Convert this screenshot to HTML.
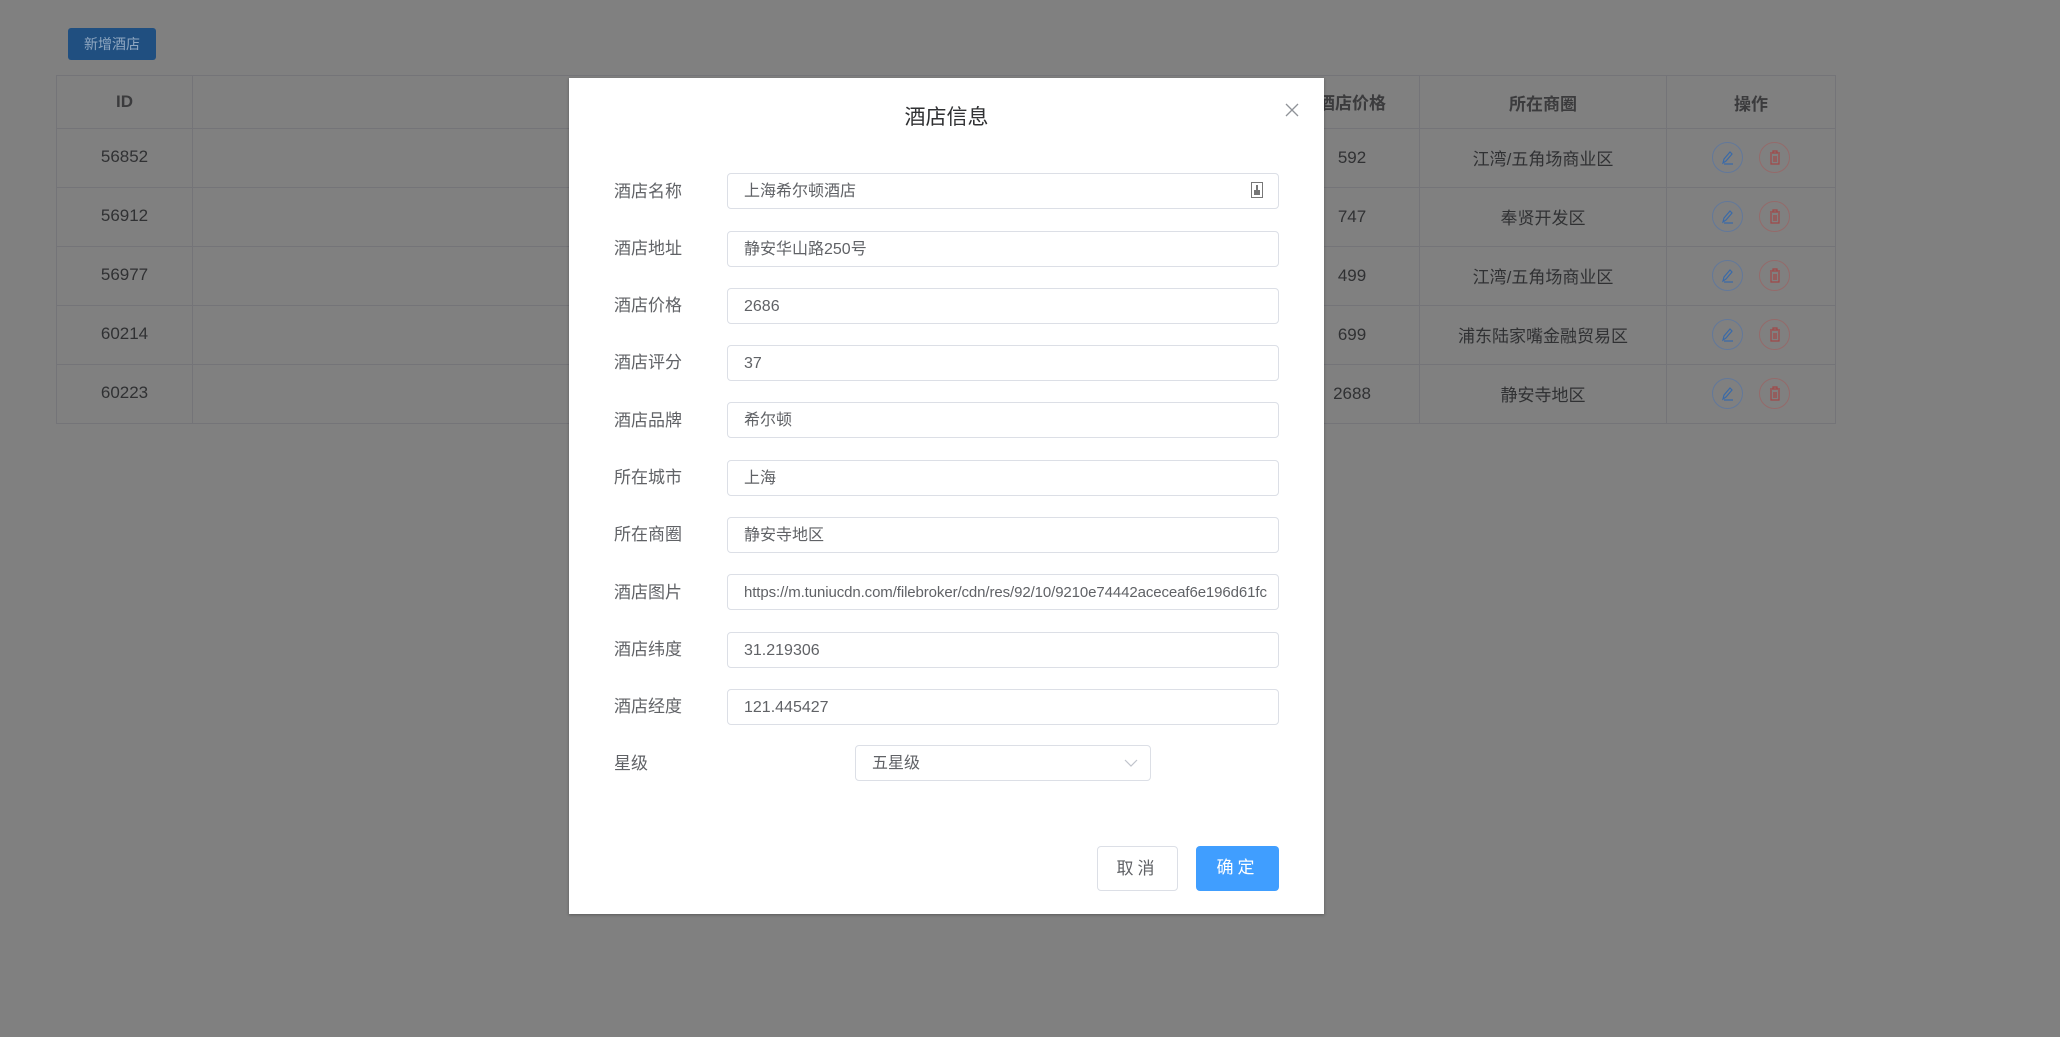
<!DOCTYPE html>
<html><head><meta charset="utf-8"><style>
*{box-sizing:border-box;margin:0;padding:0}
body{width:2060px;height:1037px;background:#808080;position:relative;overflow:hidden;font-family:"Liberation Sans","Noto Sans CJK SC",sans-serif}
.btn-add{position:absolute;left:68px;top:28px;width:88px;height:32px;background:#204f80;border-radius:3px;color:#8fa7c0;font-size:14px;line-height:32px;text-align:center}
table{position:absolute;left:56px;top:75px;border-collapse:collapse;color:#303133;font-size:17px}
td,th{border:1px solid #747478;text-align:center}
th{height:53px;color:#3b3b3d;font-weight:bold}
td{height:59px;padding-bottom:2px}
.ic{display:inline-block;width:31px;height:31px;border-radius:50%;vertical-align:middle;margin:0 8px;position:relative}
.ic.e{border:1px solid #62789a}
.ic.d{border:1px solid #946a6a}
.ic svg{position:absolute;left:7px;top:7px}
.dlg{position:absolute;left:569px;top:78px;width:755px;height:836px;background:#fff;box-shadow:0 1px 3px rgba(0,0,0,.3)}
.title{position:absolute;top:101px;left:569px;width:755px;text-align:center;font-size:21px;color:#303133}
.close{position:absolute;left:1284px;top:102px}
.lbl{position:absolute;left:614px;font-size:17px;color:#606266;margin-top:-3px}
.inp{position:absolute;left:727px;width:552px;height:36px;border:1px solid #dcdfe6;border-radius:4px;font-size:16px;color:#606266;line-height:36px;padding-left:16px;white-space:nowrap;overflow:hidden}
.sel{position:absolute;left:855px;top:745px;width:296px;height:36px;border:1px solid #dcdfe6;border-radius:4px;font-size:16px;color:#606266;line-height:36px;padding-left:16px}
.b{position:absolute;top:846px;height:45px;border-radius:4px;font-size:17px;line-height:43px;text-align:center;letter-spacing:4px}
</style></head><body>
<div class="btn-add">新增酒店</div>
<table>
<tr><th style="width:136px">ID</th><th style="width:1227px"></th><th style="width:247px">所在商圈</th><th style="width:169px">操作</th></tr>
<tr><td>56852</td><td></td><td>江湾/五角场商业区</td><td><span class="ic e"><svg width="16" height="16"><path d="M3 13l1-4 6-7 2 2-6 7z M4 14h9" stroke="#3a6aa8" fill="none" stroke-width="1.2"/></svg></span><span class="ic d"><svg width="16" height="16"><path d="M3 3h10M6 3V1h4v2M4 4v10h8V4M7 6v6M9 6v6" stroke="#a04848" fill="none" stroke-width="1.2"/></svg></span></td></tr>
<tr><td>56912</td><td></td><td>奉贤开发区</td><td><span class="ic e"><svg width="16" height="16"><path d="M3 13l1-4 6-7 2 2-6 7z M4 14h9" stroke="#3a6aa8" fill="none" stroke-width="1.2"/></svg></span><span class="ic d"><svg width="16" height="16"><path d="M3 3h10M6 3V1h4v2M4 4v10h8V4M7 6v6M9 6v6" stroke="#a04848" fill="none" stroke-width="1.2"/></svg></span></td></tr>
<tr><td>56977</td><td></td><td>江湾/五角场商业区</td><td><span class="ic e"><svg width="16" height="16"><path d="M3 13l1-4 6-7 2 2-6 7z M4 14h9" stroke="#3a6aa8" fill="none" stroke-width="1.2"/></svg></span><span class="ic d"><svg width="16" height="16"><path d="M3 3h10M6 3V1h4v2M4 4v10h8V4M7 6v6M9 6v6" stroke="#a04848" fill="none" stroke-width="1.2"/></svg></span></td></tr>
<tr><td>60214</td><td></td><td>浦东陆家嘴金融贸易区</td><td><span class="ic e"><svg width="16" height="16"><path d="M3 13l1-4 6-7 2 2-6 7z M4 14h9" stroke="#3a6aa8" fill="none" stroke-width="1.2"/></svg></span><span class="ic d"><svg width="16" height="16"><path d="M3 3h10M6 3V1h4v2M4 4v10h8V4M7 6v6M9 6v6" stroke="#a04848" fill="none" stroke-width="1.2"/></svg></span></td></tr>
<tr><td>60223</td><td></td><td>静安寺地区</td><td><span class="ic e"><svg width="16" height="16"><path d="M3 13l1-4 6-7 2 2-6 7z M4 14h9" stroke="#3a6aa8" fill="none" stroke-width="1.2"/></svg></span><span class="ic d"><svg width="16" height="16"><path d="M3 3h10M6 3V1h4v2M4 4v10h8V4M7 6v6M9 6v6" stroke="#a04848" fill="none" stroke-width="1.2"/></svg></span></td></tr>
</table>
<div style="position:absolute;left:1318px;top:89px;font-size:17px;font-weight:bold;color:#3b3b3d">酒店价格</div>
<div style="position:absolute;left:1300px;top:128px;width:104px;text-align:center;font-size:17px;color:#303133;line-height:59px">592<br>747<br>499<br>699<br>2688</div>
<div class="dlg"></div>
<div class="title">酒店信息</div>
<svg class="close" width="16" height="16"><path d="M2 2l12 12M14 2L2 14" stroke="#909399" stroke-width="1.3"/></svg>
<div class="lbl" style="top:180px">酒店名称</div><div class="inp" style="top:173px">上海希尔顿酒店</div>
<svg style="position:absolute;left:1251px;top:182px" width="12" height="16"><rect x="0.5" y="0.5" width="11" height="15" fill="none" stroke="#777"/><rect x="3" y="8" width="6" height="5" fill="#777"/><rect x="5" y="3" width="2" height="5" fill="#777"/></svg>
<div class="lbl" style="top:237px">酒店地址</div><div class="inp" style="top:231px">静安华山路250号</div>
<div class="lbl" style="top:294px">酒店价格</div><div class="inp" style="top:288px">2686</div>
<div class="lbl" style="top:351px">酒店评分</div><div class="inp" style="top:345px">37</div>
<div class="lbl" style="top:409px">酒店品牌</div><div class="inp" style="top:402px">希尔顿</div>
<div class="lbl" style="top:466px">所在城市</div><div class="inp" style="top:460px">上海</div>
<div class="lbl" style="top:523px">所在商圈</div><div class="inp" style="top:517px">静安寺地区</div>
<div class="lbl" style="top:581px">酒店图片</div><div class="inp" style="top:574px;font-size:15px;letter-spacing:-0.1px">https://m.tuniucdn.com/filebroker/cdn/res/92/10/9210e74442aceceaf6e196d61fc</div>
<div class="lbl" style="top:638px">酒店纬度</div><div class="inp" style="top:632px">31.219306</div>
<div class="lbl" style="top:695px">酒店经度</div><div class="inp" style="top:689px">121.445427</div>
<div class="lbl" style="top:752px">星级</div>
<div class="sel">五星级<svg style="position:absolute;right:12px;top:12px" width="14" height="10"><path d="M1 2l6 6 6-6" stroke="#c0c4cc" fill="none" stroke-width="1.2"/></svg></div>
<div class="b" style="left:1097px;width:81px;border:1px solid #dcdfe6;color:#606266">取消</div>
<div class="b" style="left:1196px;width:83px;background:#409eff;color:#fff">确定</div>
</body></html>
